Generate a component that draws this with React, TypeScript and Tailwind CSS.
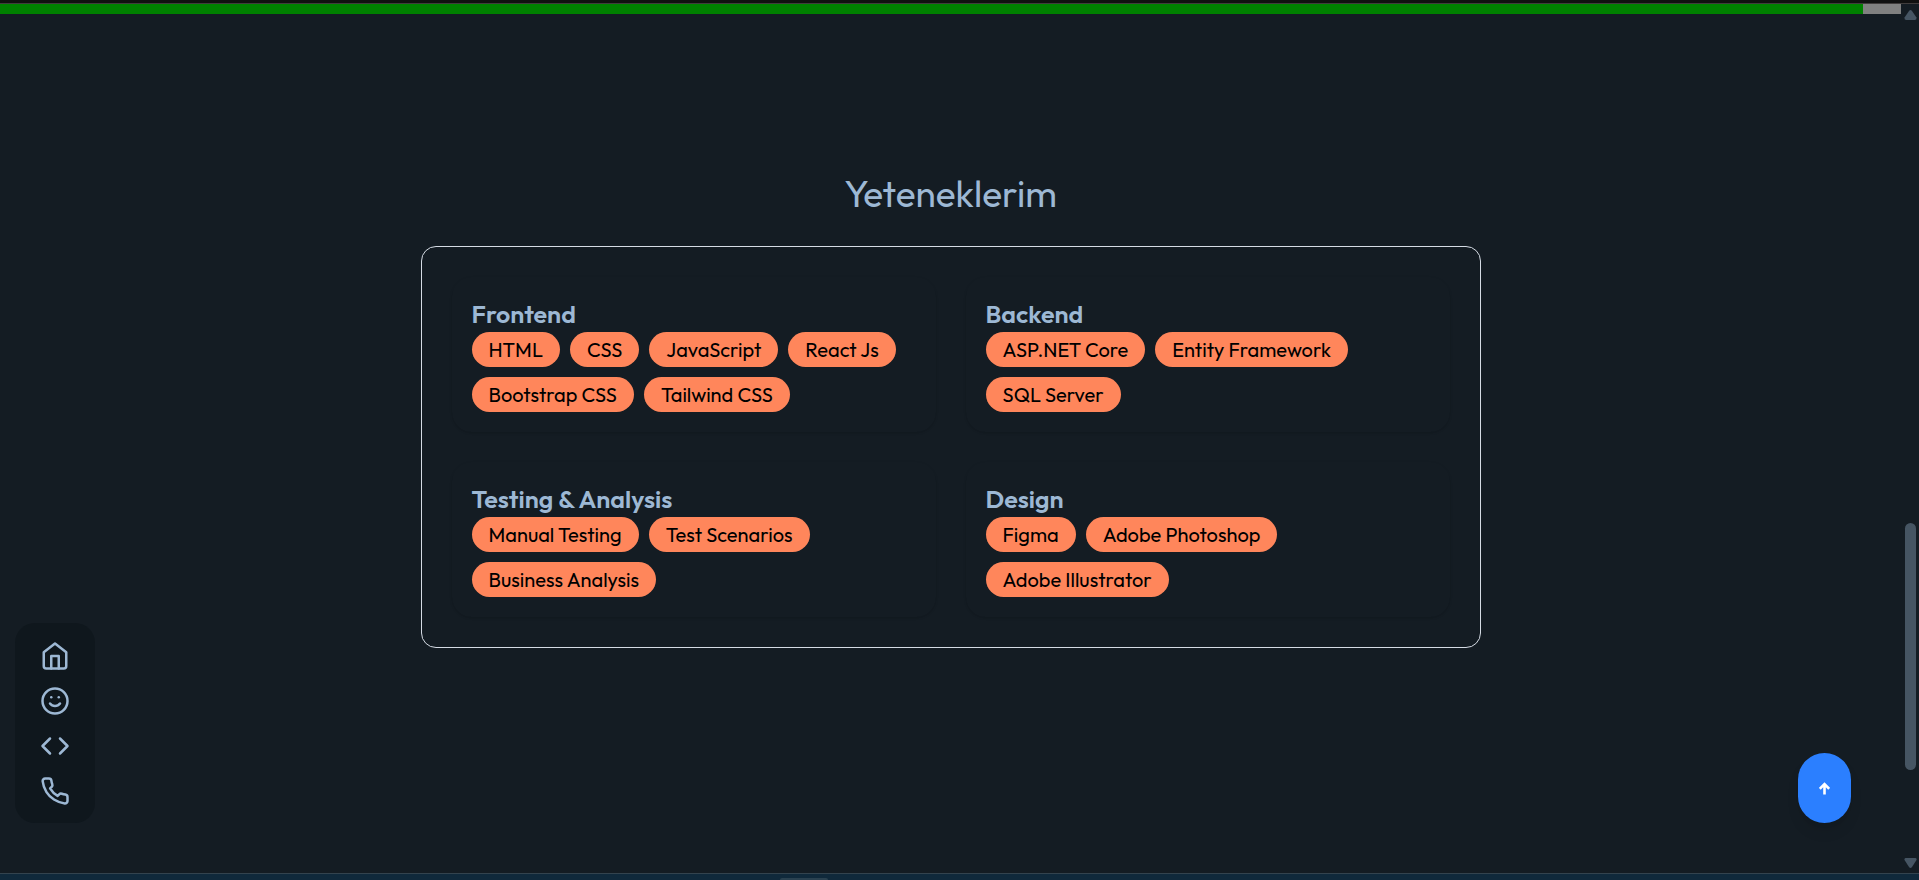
import { FiCode, FiHome, FiPhone, FiSmile } from "react-icons/fi";

const groups = [
  { title: "Frontend", skills: ["HTML", "CSS", "JavaScript", "React Js", "Bootstrap CSS", "Tailwind CSS"] },
  { title: "Backend", skills: ["ASP.NET Core", "Entity Framework", "SQL Server"] },
  { title: "Testing & Analysis", skills: ["Manual Testing", "Test Scenarios", "Business Analysis"] },
  { title: "Design", skills: ["Figma", "Adobe Photoshop", "Adobe Illustrator"] },
];

const links = [
  { label: "Ana sayfa", href: "#home", Icon: FiHome },
  { label: "Hakkımda", href: "#about", Icon: FiSmile },
  { label: "Yetenekler", href: "#skills", Icon: FiCode },
  { label: "İletişim", href: "#contact", Icon: FiPhone },
];

function Scrollbar() {
  return (
    <div aria-hidden="true" className="flex w-[18px] shrink-0 flex-col items-center justify-between pt-[6px] pb-[5px]">
      <svg width="13" height="10" viewBox="0 0 13 10" fill="#465563">
        <path d="M6.5 0 Q7.3 0 8 1 L12.5 7.6 Q13 10 11 10 H2 Q0 10 .5 7.6 L5 1 Q5.7 0 6.5 0Z" />
      </svg>
      <div className="flex w-full grow flex-col items-center">
        <div className="grow-[503]" />
        <div className="w-[11px] grow-[247] rounded-full bg-[#465563]" />
        <div className="grow-[88]" />
      </div>
      <svg width="13" height="10" viewBox="0 0 13 10" fill="#465563">
        <path d="M1.5 0H11.5Q13 .5 12.5 2L8 9Q6.5 11 5 9L.5 2Q0 .5 1.5 0Z" />
      </svg>
    </div>
  );
}

export default function App() {
  return (
    <div className="flex h-screen flex-col overflow-hidden bg-[#141c23] font-['Outfit','Lato',sans-serif] text-[#9db8d4]">
      <div className="h-[3px] shrink-0 bg-[#101010]" />
      <div className="h-px shrink-0 bg-[#403c3c]" />
      <div className="flex min-h-0 grow">
        <div className="relative flex min-w-0 grow flex-col">
          <div className="h-[10px] shrink-0 bg-[#808080]">
            <div className="h-full w-[98%] bg-[#008000]" />
          </div>

          <main id="skills" className="flex flex-col items-center px-8 pt-[156px]">
            <h1 className="text-[37px] leading-[48px]">Yeteneklerim</h1>
            <section className="mt-7 grid w-full max-w-[1060px] grid-cols-2 gap-[30px] rounded-[15px] border border-[#d5dbe4] p-[30px]">
              {groups.map((group) => (
                <article key={group.title} className="rounded-[20px] p-5 shadow-sm">
                  <h2 className="text-[25px] leading-[35px] font-semibold">{group.title}</h2>
                  <ul className="flex flex-wrap gap-[10px] text-black">
                    {group.skills.map((skill) => (
                      <li key={skill} className="rounded-full bg-[#ff865b] px-[17px] text-[20px] leading-[35px]">
                        {skill}
                      </li>
                    ))}
                  </ul>
                </article>
              ))}
            </section>
          </main>

          <nav className="absolute bottom-[50px] left-[15px] flex h-[200px] w-20 flex-col items-center justify-center gap-[15px] rounded-[20px] bg-[#0f171d]">
            {links.map(({ label, href, Icon }) => (
              <a key={href} href={href} aria-label={label}>
                <Icon size={30} />
              </a>
            ))}
          </nav>

          <button
            type="button"
            aria-label="Yukarı çık"
            className="absolute right-[50px] bottom-[50px] flex h-[70px] w-[53px] items-center justify-center rounded-full bg-[#2b7fff] text-white shadow-lg"
          >
            <svg width="11" height="13" viewBox="0 0 11 13" fill="none" stroke="currentColor" strokeWidth="2.6">
              <path d="M5.5 12.5V2M.8 6.8L5.5 2L10.2 6.8" />
            </svg>
          </button>
        </div>
        <Scrollbar />
      </div>
      <div className="h-px shrink-0 bg-[#33434e]" />
      <div className="flex h-[6px] shrink-0 items-end bg-[#10293b]">
        <div className="ml-[40.65%] h-[2px] w-12 rounded-t-sm bg-[#2a4150]" />
      </div>
    </div>
  );
}
